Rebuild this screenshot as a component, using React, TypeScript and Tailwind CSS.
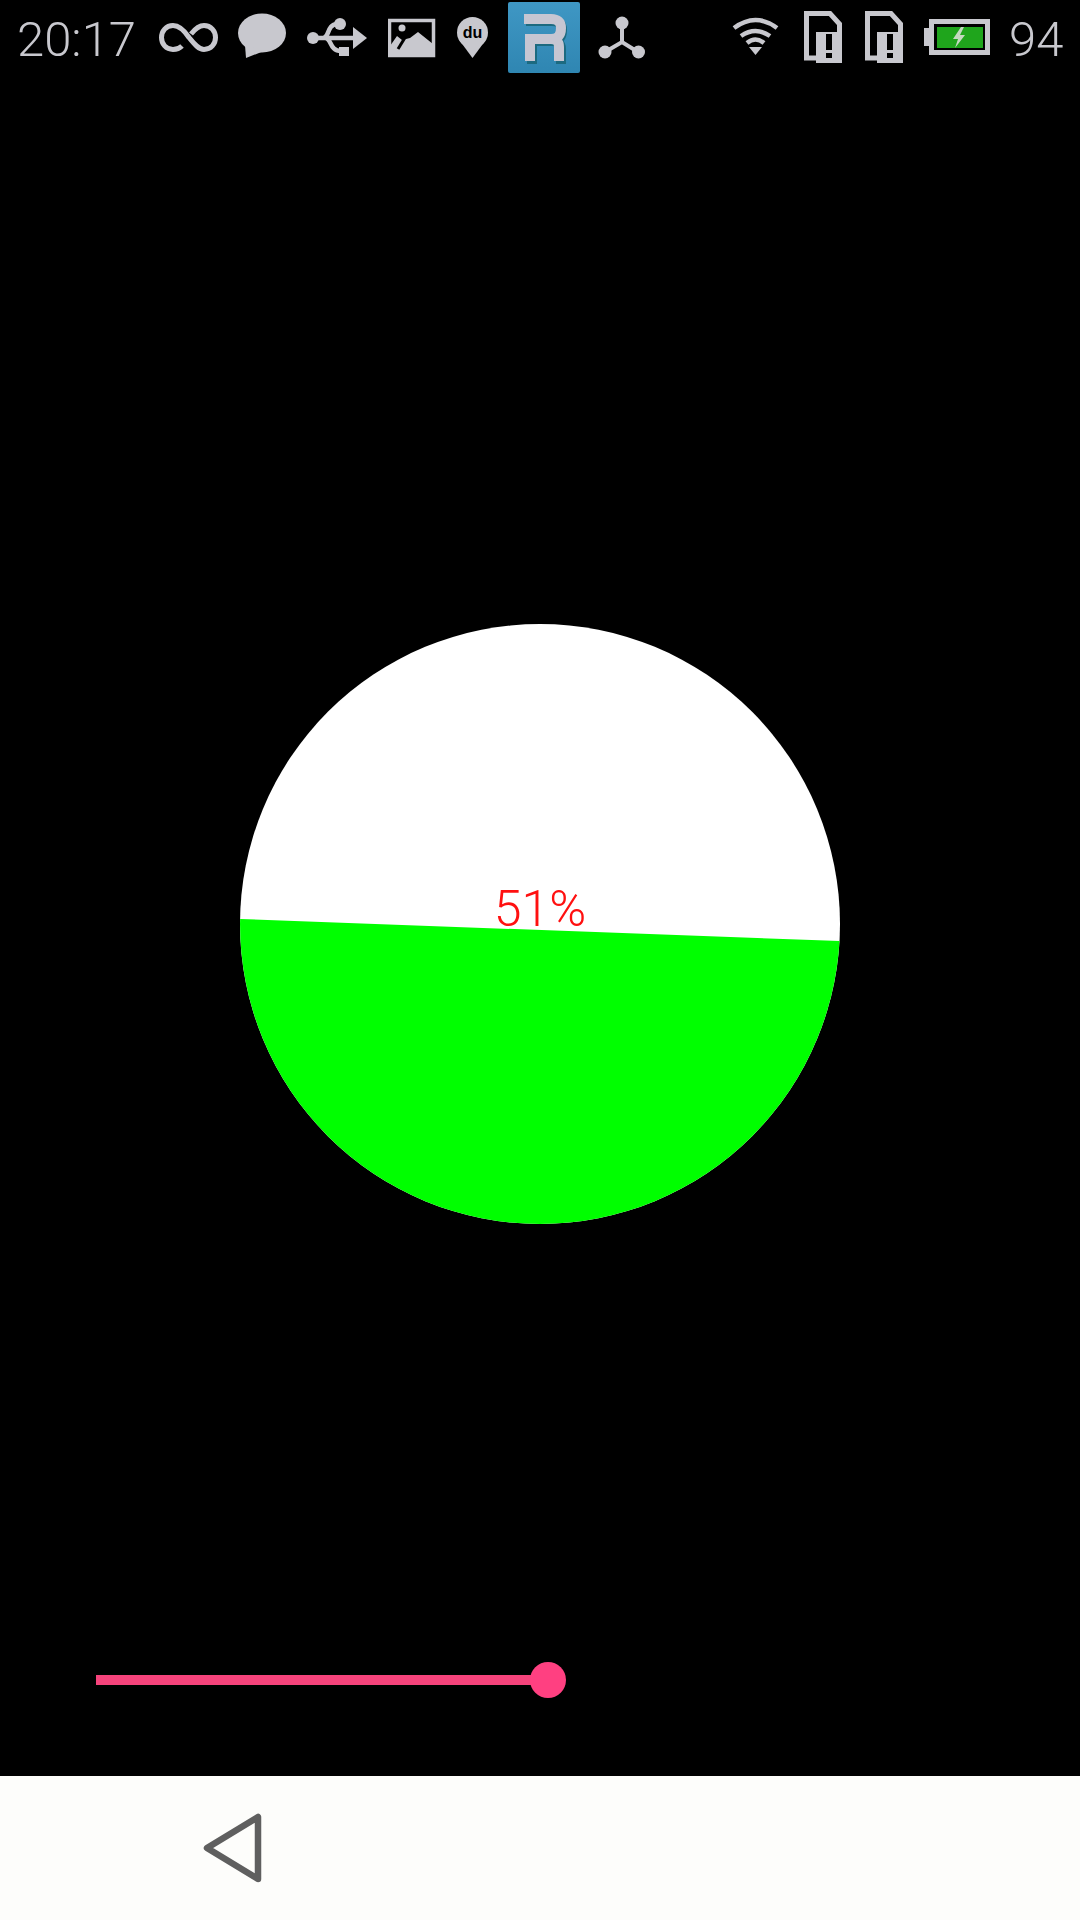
const ICON = "#c8c8ce";

// every status icon uses page x coords in its viewBox, and the full bar height
function StatusIcon({ x, w, className, children }: { x: number; w: number; className?: string; children: React.ReactNode }) {
  return (
    <svg width={w} height={76} viewBox={`${x} 0 ${w} 76`} className={`shrink-0 ${className ?? ""}`}>
      {children}
    </svg>
  );
}

function SimIcon({ className }: { className?: string }) {
  return (
    <StatusIcon x={803} w={39} className={className}>
      <path d="M805.5 13.5H829L838.5 24V58H805.5Z" fill="none" stroke={ICON} strokeWidth="5" />
      <rect x="815" y="32" width="26" height="31" fill={ICON} />
      <rect x="825" y="34" width="6" height="16" fill="#000" />
      <rect x="825" y="53" width="6" height="5" fill="#000" />
    </StatusIcon>
  );
}

function StatusBar() {
  return (
    <div className="flex h-[76px] shrink-0 items-start text-[#c8c8ce]">
      <span className="ml-[17px] w-[142px] pt-[11px] font-['Roboto',sans-serif] text-[49px] leading-[57px] font-light">
        20:17
      </span>
      <StatusIcon x={158} w={60}>
        <path
          d="M181 46C179 48 175 49.5 172 49.5C165 49.5 160.5 44 160.5 37.5C160.5 31 165 25.5 172 25.5C178 25.5 183 30 188 37.5C194 45 198 49.5 203 49.5C210 49.5 214.5 44 214.5 37.5C214.5 31 210 25.5 203 25.5C198 25.5 194 29 190 34"
          fill="none"
          stroke={ICON}
          strokeWidth="5"
        />
      </StatusIcon>
      <StatusIcon x={237} w={48} className="ml-[19px]">
        <ellipse cx="261" cy="33" rx="24" ry="19.5" fill={ICON} />
        <path d="M244 45L245 58L263 51Z" fill={ICON} />
      </StatusIcon>
      <StatusIcon x={299} w={68} className="ml-[14px]">
        <path d="M312 38H353M322 38C329 38 325 24 337 24M324 38C331 38 328 51 340 51" fill="none" stroke={ICON} strokeWidth="4.5" />
        <circle cx="312" cy="38" r="6" fill={ICON} />
        <circle cx="339" cy="24" r="6" fill={ICON} />
        <rect x="338" y="47" width="10" height="9" fill={ICON} />
        <path d="M352 27L366 38L352 49Z" fill={ICON} />
      </StatusIcon>
      <StatusIcon x={387} w={48} className="ml-[20px]">
        <rect x="388.5" y="20.5" width="44" height="35" fill="none" stroke={ICON} strokeWidth="3.5" />
        <circle cx="401" cy="28" r="3.5" fill={ICON} />
        <path d="M389 56V46L396 36L401 40L409 38L417 32L432 44V56Z" fill={ICON} />
        <path d="M405 36L397 49" fill="none" stroke="#000" strokeWidth="3" />
      </StatusIcon>
      <StatusIcon x={456} w={32} className="ml-[21px]">
        <circle cx="471.5" cy="32.5" r="15.5" fill={ICON} />
        <path d="M457.5 39L471.5 58L485.5 39Z" fill={ICON} />
        <text x="471.5" y="38" textAnchor="middle" fontFamily="Liberation Sans, sans-serif" fontWeight="700" fontSize="16" fill="#000">
          du
        </text>
      </StatusIcon>
      <StatusIcon x={507} w={72} className="ml-[19px]">
        <defs>
          <linearGradient id="rBg" x1="0" y1="0" x2="0" y2="1">
            <stop offset="0" stopColor="#3f97c4" />
            <stop offset="1" stopColor="#2f86b2" />
          </linearGradient>
        </defs>
        <rect x="507" y="2" width="72" height="71" rx="2" fill="url(#rBg)" />
        <g fill="none" strokeWidth="10">
          <path d="M525 21H551Q561 21 561 30Q561 41 551 41H531V64M551 41Q560 41 560 49V64" stroke="#1c6a80" />
          <path d="M523 19H550Q560 19 560 28Q560 39 550 39H529V61M550 39Q558 39 558 47V61" stroke="#c6c6d2" />
        </g>
      </StatusIcon>
      <StatusIcon x={597} w={48} className="ml-[18px]">
        <path d="M621 23V42M604 52L621 42L637 52" fill="none" stroke={ICON} strokeWidth="4" />
        <circle cx="621" cy="23" r="6.5" fill={ICON} />
        <circle cx="604" cy="52" r="6.5" fill={ICON} />
        <circle cx="637.5" cy="52" r="6.5" fill={ICON} />
      </StatusIcon>
      <StatusIcon x={731} w={48} className="ml-[86px]">
        <g fill="none" stroke={ICON} strokeWidth="4.5">
          <path d="M733 28Q754.5 12 776 28" />
          <path d="M740 36Q754.5 26 769 36" />
          <path d="M746 43Q754.5 36 763 43" />
        </g>
        <path d="M748 47H761L754.5 55Z" fill={ICON} />
      </StatusIcon>
      <SimIcon className="ml-[24px]" />
      <SimIcon className="ml-[22px]" />
      <StatusIcon x={923} w={67} className="ml-[20px]">
        <rect x="923" y="28" width="8" height="18" fill={ICON} />
        <rect x="930.5" y="21.5" width="56" height="31" fill="#000" stroke={ICON} strokeWidth="5" />
        <rect x="936" y="27" width="46" height="21" fill="#1fa51c" />
        <path d="M960 27L952 39H957L954 48L964 35H959L963 27Z" fill="#c4d8c0" />
      </StatusIcon>
      <span className="ml-[18px] pt-[11px] font-['Roboto',sans-serif] text-[49px] leading-[57px] font-light">94</span>
    </div>
  );
}

function WaveCircle() {
  return (
    <div className="relative mt-[548px] h-[600px] w-[600px] shrink-0 self-center">
      <svg width="600" height="600" viewBox="0 0 600 600" className="block">
        <defs>
          <clipPath id="ball">
            <circle cx="300" cy="300" r="300" />
          </clipPath>
        </defs>
        <g clipPath="url(#ball)">
          <rect width="600" height="600" fill="#fff" />
          <path d="M0 295L600 317V600H0Z" fill="#00ff00" />
        </g>
      </svg>
      <span className="absolute top-[255px] left-0 w-full text-center font-['Roboto',sans-serif] text-[50px] leading-[60px] font-light text-[#ff1010]">
        51%
      </span>
    </div>
  );
}

function Slider() {
  return (
    <div className="mt-[451px] pl-[96px]">
      <div className="relative h-[10px] w-[452px] bg-[#f5437b]">
        <div className="absolute top-[-13px] right-[-18px] h-[36px] w-[36px] rounded-full bg-[#ff4081]" />
      </div>
    </div>
  );
}

export default function App() {
  return (
    <div className="flex h-[1920px] w-[1080px] flex-col overflow-hidden bg-black">
      <StatusBar />
      <div className="flex flex-1 flex-col">
        <WaveCircle />
        <Slider />
      </div>
      <div className="flex h-[144px] shrink-0 items-center bg-[#fdfdfb] pl-[202px]">
        <svg width="60" height="70" viewBox="0 0 60 70">
          <path d="M5 35L56 4V66Z" fill="none" stroke="#5f5f5f" strokeWidth="6.5" strokeLinejoin="round" />
        </svg>
      </div>
    </div>
  );
}
